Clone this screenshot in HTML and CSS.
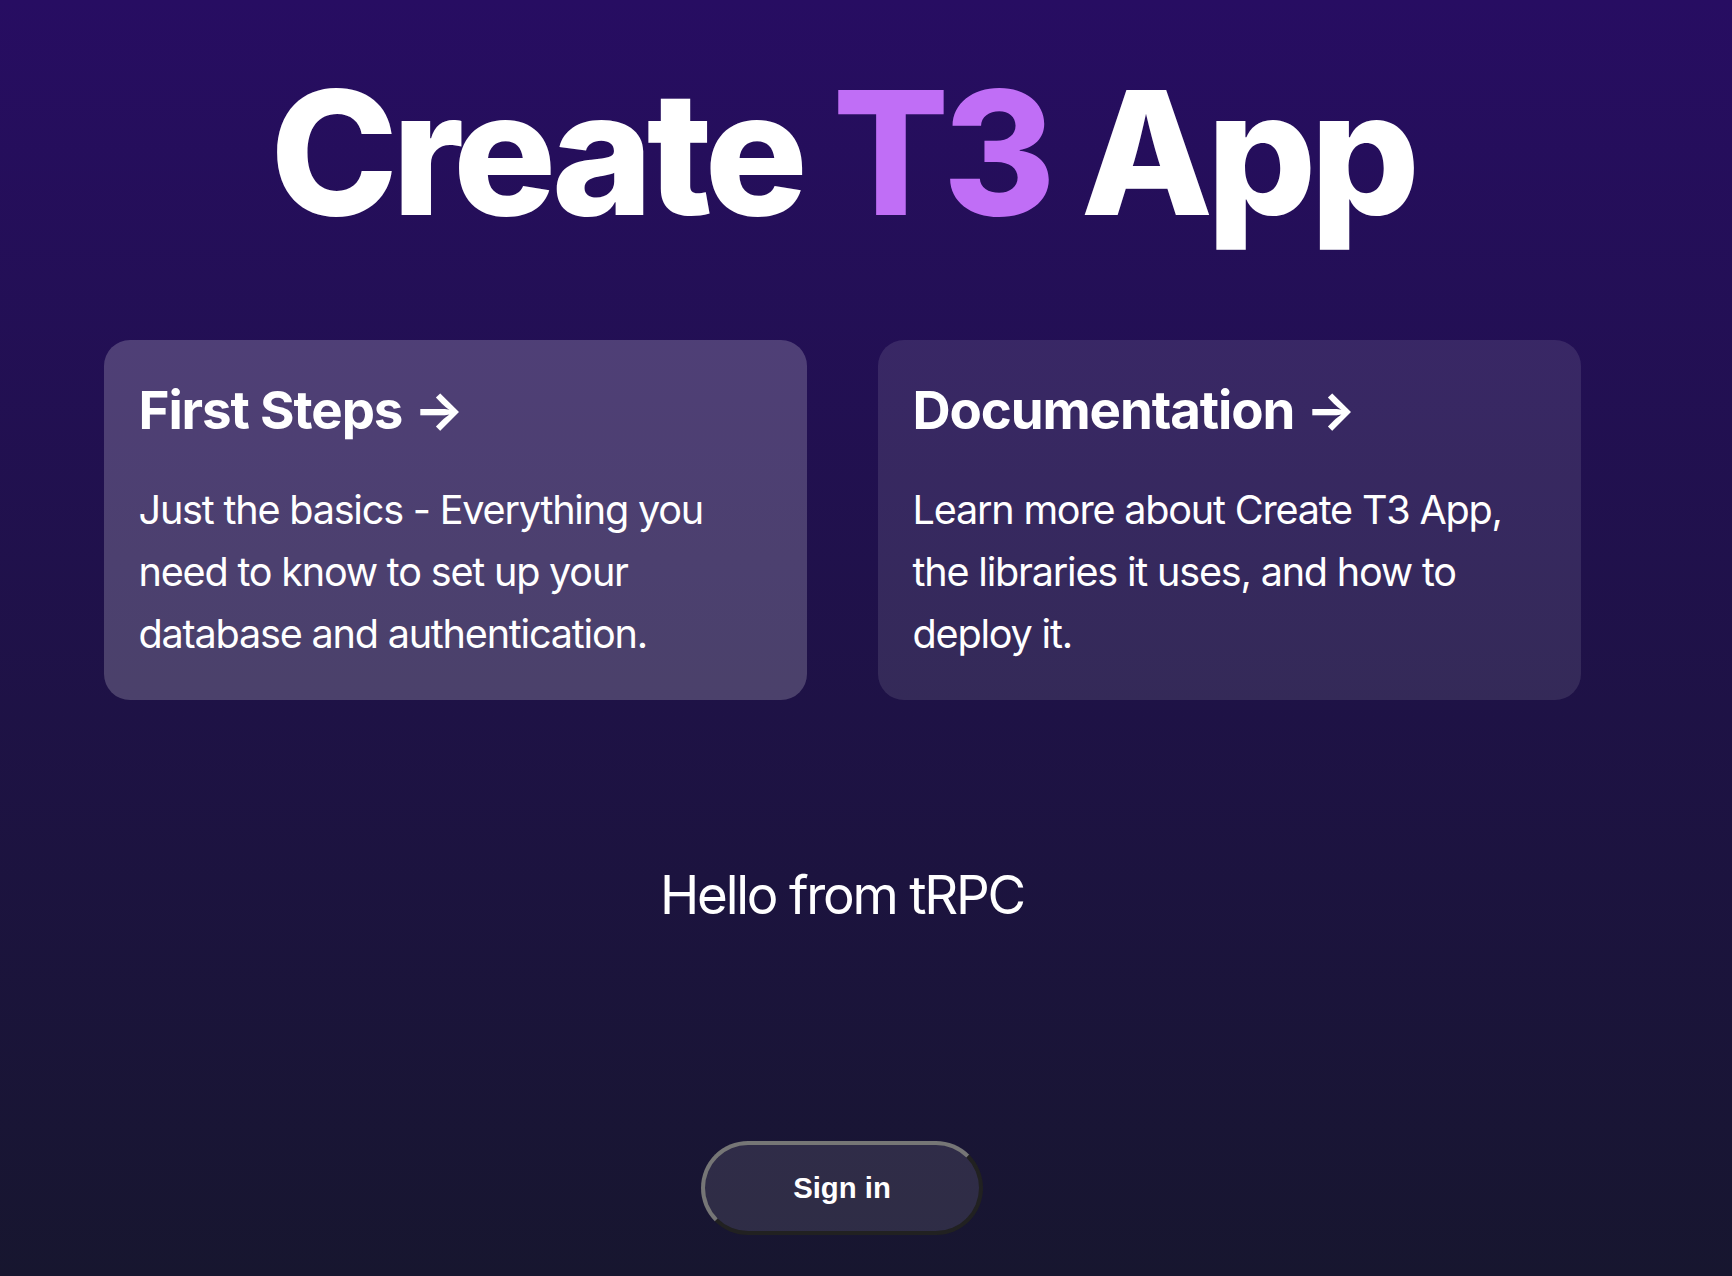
FILE: index.html
```html
<!DOCTYPE html>
<html lang="en">
<head>
<meta charset="utf-8">
<title>Create T3 App</title>
<link rel="stylesheet" href="styles.css">
</head>
<body>
<main class="page">
  <div class="container">
    <h1 class="title">Create <span class="accent">T3</span> App</h1>
    <div class="cards">
      <a class="card card-hover" href="#">
        <h3 class="card-title">First Steps →</h3>
        <div class="card-text">Just the basics - Everything you need to know to set up your database and authentication.</div>
      </a>
      <a class="card" href="#">
        <h3 class="card-title">Documentation →</h3>
        <div class="card-text">Learn more about Create T3 App, the libraries it uses, and how to deploy it.</div>
      </a>
    </div>
    <p class="hello">Hello from tRPC</p>
    <button class="signin" type="button">Sign in</button>
  </div>
</main>
</body>
</html>
```
FILE: styles.css
```css
* { box-sizing: border-box; }
html, body { margin: 0; padding: 0; }
body {
  font-family: Inter, "Noto Sans", sans-serif;
  color: #fff;
}
.page {
  min-height: 100vh;
  display: flex;
  flex-direction: column;
  background: linear-gradient(to bottom, #270d62 0%, #17162f 100%);
}
.container {
  width: 1684px;
  padding: 66px 35px 0;
  display: flex;
  flex-direction: column;
  align-items: center;
}
.title {
  margin: 0;
  font-size: 172px;
  line-height: 1;
  font-weight: 800;
  letter-spacing: -6.3px;
  color: #fff;
}
.accent { color: #c06ef6; }
.cards {
  margin-top: 102px;
  display: grid;
  grid-template-columns: 703px 703px;
  gap: 71px;
}
.card {
  display: flex;
  flex-direction: column;
  gap: 35px;
  padding: 35px;
  border-radius: 26px;
  background: rgba(255, 255, 255, 0.1);
  color: #fff;
  text-decoration: none;
}
.card-hover { background: rgba(255, 255, 255, 0.2); }
.card-title {
  margin: 0;
  font-size: 52.8px;
  line-height: 70.4px;
  font-weight: 700;
  letter-spacing: -1.1px;
}
.card-text {
  font-size: 39.6px;
  line-height: 61.6px;
  font-weight: 400;
  letter-spacing: -1.2px;
}
.hello {
  margin: 160px 0 0;
  font-size: 52.8px;
  line-height: 70.4px;
  font-weight: 400;
  letter-spacing: -2.2px;
}
.signin {
  margin-top: 210px;
  padding: 26.4px 88px;
  border: 4px outset #767676;
  border-radius: 9999px;
  background: rgba(255, 255, 255, 0.1);
  color: #fff;
  font-family: "Liberation Sans", Arial, sans-serif;
  font-weight: 700;
  font-size: 29.3px;
  line-height: normal;
}
```
